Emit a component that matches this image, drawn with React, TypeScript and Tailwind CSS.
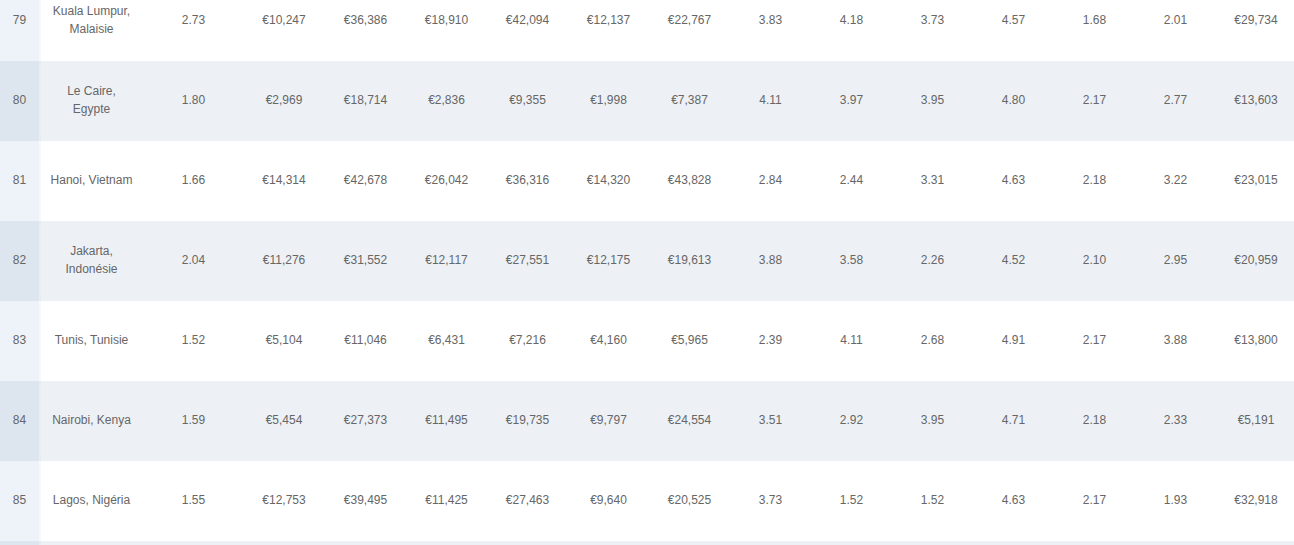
const rows = [
  ['79', 'Kuala Lumpur, Malaisie', '2.73', '€10,247', '€36,386', '€18,910', '€42,094', '€12,137', '€22,767', '3.83', '4.18', '3.73', '4.57', '1.68', '2.01', '€29,734'],
  ['80', 'Le Caire, Egypte', '1.80', '€2,969', '€18,714', '€2,836', '€9,355', '€1,998', '€7,387', '4.11', '3.97', '3.95', '4.80', '2.17', '2.77', '€13,603'],
  ['81', 'Hanoi, Vietnam', '1.66', '€14,314', '€42,678', '€26,042', '€36,316', '€14,320', '€43,828', '2.84', '2.44', '3.31', '4.63', '2.18', '3.22', '€23,015'],
  ['82', 'Jakarta, Indonésie', '2.04', '€11,276', '€31,552', '€12,117', '€27,551', '€12,175', '€19,613', '3.88', '3.58', '2.26', '4.52', '2.10', '2.95', '€20,959'],
  ['83', 'Tunis, Tunisie', '1.52', '€5,104', '€11,046', '€6,431', '€7,216', '€4,160', '€5,965', '2.39', '4.11', '2.68', '4.91', '2.17', '3.88', '€13,800'],
  ['84', 'Nairobi, Kenya', '1.59', '€5,454', '€27,373', '€11,495', '€19,735', '€9,797', '€24,554', '3.51', '2.92', '3.95', '4.71', '2.18', '2.33', '€5,191'],
  ['85', 'Lagos, Nigéria', '1.55', '€12,753', '€39,495', '€11,425', '€27,463', '€9,640', '€20,525', '3.73', '1.52', '1.52', '4.63', '2.17', '1.93', '€32,918'],
  // next row only peeks in at the bottom edge
  ['', '', '', '', '', '', '', '', '', '', '', '', '', '', '', ''],
]

export default function App() {
  return (
    <div className="h-[545px] w-[1294px] overflow-hidden bg-white font-['Liberation_Sans',Arial,sans-serif] text-[12px] leading-[18px] text-[#666]">
      <div className="-mt-[19px] w-[1296px]">
        {rows.map((row, i) => (
          <div
            key={i}
            className={`grid h-[80px] grid-cols-[41px_101px_97px_86px_81px_81px_81px_81px_81px_81px_81px_81px_81px_81px_81px_80px] ${
              i % 2 === 1 ? 'bg-[#edf1f6]' : 'bg-white'
            }`}
          >
            {row.map((cell, j) => (
              <div
                key={j}
                className={`flex items-center justify-center pb-[2px] text-center ${
                  j === 0
                    ? i % 2 === 1
                      ? 'border-r-2 border-[#e8eef4] bg-[#dde6ef]'
                      : 'border-r-2 border-[#f6f9fc] bg-[#eef3f9]'
                    : ''
                } ${j === 1 ? 'px-[7px]' : ''} ${j === 2 ? 'pl-[6px]' : ''} ${j === 3 ? 'pl-[4px]' : ''}`}
              >
                {cell}
              </div>
            ))}
          </div>
        ))}
      </div>
    </div>
  )
}
